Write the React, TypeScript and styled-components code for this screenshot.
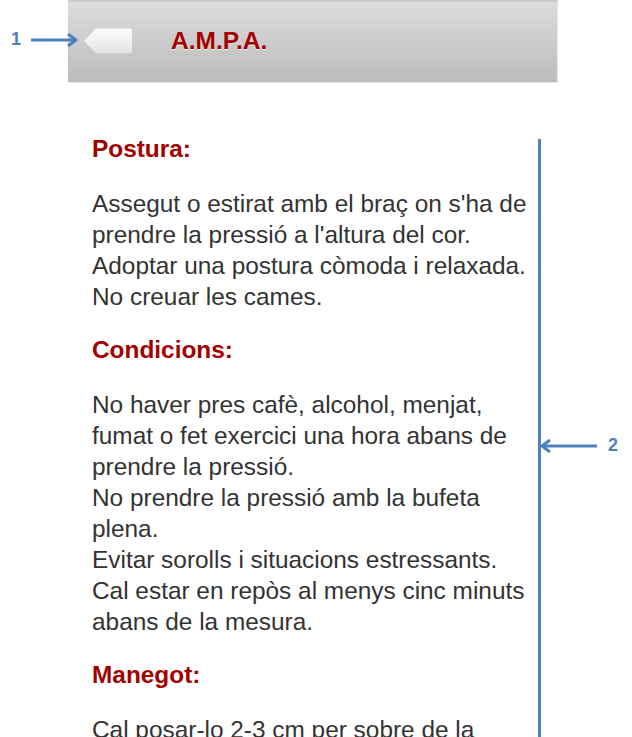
import React from "react";
import styled, { createGlobalStyle } from "styled-components";

const Global = createGlobalStyle`
  html, body { margin: 0; padding: 0; background: #fff; }
  body { font-family: "Liberation Sans", Arial, sans-serif; }
`;

const Page = styled.div`
  position: relative;
  width: 632px;
  height: 737px;
  overflow: hidden;
  background: #fff;
`;

const TopRow = styled.div`
  display: flex;
  align-items: stretch;
  height: 83px;
  padding-left: 68px;
`;

const Callout = styled.div`
  display: flex;
  align-items: center;
  color: #4f81bd;
  font-family: "Liberation Sans", Arial, sans-serif;
  font-size: 18px;
  font-weight: bold;
`;

const Callout1 = styled(Callout)`
  position: absolute;
  left: 11px;
  top: 29px;
  gap: 10px;
`;

const Callout2 = styled(Callout)`
  position: absolute;
  left: 540px;
  top: 435px;
  gap: 11px;
`;

const HeaderBar = styled.header`
  width: 490px;
  box-sizing: border-box;
  border-top: 2px solid #cacaca;
  border-bottom: 1px solid #e6e6e6;
  border-right: 1px solid #e8e8e8;
  background: linear-gradient(#dcdcdc, #bcbcbc);
  display: flex;
  align-items: center;
  padding: 0 0 2px 15px;
  gap: 38px;
`;

const BackButton = styled.button`
  border: 0;
  padding: 0;
  background: none;
  width: 50px;
  height: 28px;
  display: block;
`;

const Title = styled.h1`
  margin: 0;
  font-family: "Liberation Sans", Arial, sans-serif;
  font-size: 24.5px;
  font-weight: bold;
  color: #a30000;
  text-shadow: 0 1px 0 rgba(255, 255, 255, 0.7);
`;

const Body = styled.div`
  display: flex;
  padding-left: 92px;
  margin-top: 50px;
`;

const TextCol = styled.article`
  width: 446px;
  font-family: "Liberation Sans", Arial, sans-serif;
  font-size: 24.4px;
  line-height: 31px;
  color: #333;
`;

const Heading = styled.h2`
  margin: 0 0 24px 0;
  font-size: 24.4px;
  line-height: 31px;
  font-weight: bold;
  color: #a30000;
`;

const Para = styled.p`
  margin: 0 0 22px 0;
`;

const Marker = styled.div`
  width: 3px;
  margin-top: 6px;
  height: 700px;
  background: #4f81bd;
`;

const Arrow = ({ dir, len }: { dir: "left" | "right"; len: number }) => (
  <svg width={len} height="14" viewBox={`0 0 ${len} 14`}>
    {dir === "right" ? (
      <>
        <line x1="0" y1="7" x2={len - 3} y2="7" stroke="#4f81bd" strokeWidth="3" />
        <polyline points={`${len - 10},1 ${len - 2},7 ${len - 10},13`} fill="none" stroke="#4f81bd" strokeWidth="3" strokeLinejoin="round" />
      </>
    ) : (
      <>
        <line x1="3" y1="7" x2={len} y2="7" stroke="#4f81bd" strokeWidth="3" />
        <polyline points="10,1 2,7 10,13" fill="none" stroke="#4f81bd" strokeWidth="3" strokeLinejoin="round" />
      </>
    )}
  </svg>
);

const BackShape = () => (
  <svg width="50" height="28" viewBox="0 0 50 28">
    <defs>
      <linearGradient id="bg" x1="0" y1="0" x2="0" y2="1">
        <stop offset="0" stopColor="#fdfdfd" />
        <stop offset="1" stopColor="#e2e2e2" />
      </linearGradient>
    </defs>
    <path d="M1 14 L13 1.5 H46 Q49 1.5 49 4.5 V23.5 Q49 26.5 46 26.5 H13 Z" fill="url(#bg)" />
  </svg>
);

export default function App() {
  return (
    <>
      <Global />
      <Page>
        <TopRow>
          <HeaderBar>
            <BackButton aria-label="Enrere">
              <BackShape />
            </BackButton>
            <Title>A.M.P.A.</Title>
          </HeaderBar>
        </TopRow>
        <Body>
          <TextCol>
            <Heading>Postura:</Heading>
            <Para>
              Assegut o estirat amb el braç on s'ha de prendre la pressió a l'altura del cor.
              <br />
              Adoptar una postura còmoda i relaxada.
              <br />
              No creuar les cames.
            </Para>
            <Heading>Condicions:</Heading>
            <Para>
              No haver pres cafè, alcohol, menjat, fumat o fet exercici una hora abans de prendre la pressió.
              <br />
              No prendre la pressió amb la bufeta plena.
              <br />
              Evitar sorolls i situacions estressants.
              <br />
              Cal estar en repòs al menys cinc minuts abans de la mesura.
            </Para>
            <Heading>Manegot:</Heading>
            <Para>Cal posar-lo 2-3 cm per sobre de la flexura del colze.</Para>
          </TextCol>
          <Marker />
        </Body>
        <Callout1>
          <span>1</span>
          <Arrow dir="right" len={47} />
        </Callout1>
        <Callout2>
          <Arrow dir="left" len={57} />
          <span>2</span>
        </Callout2>
      </Page>
    </>
  );
}
